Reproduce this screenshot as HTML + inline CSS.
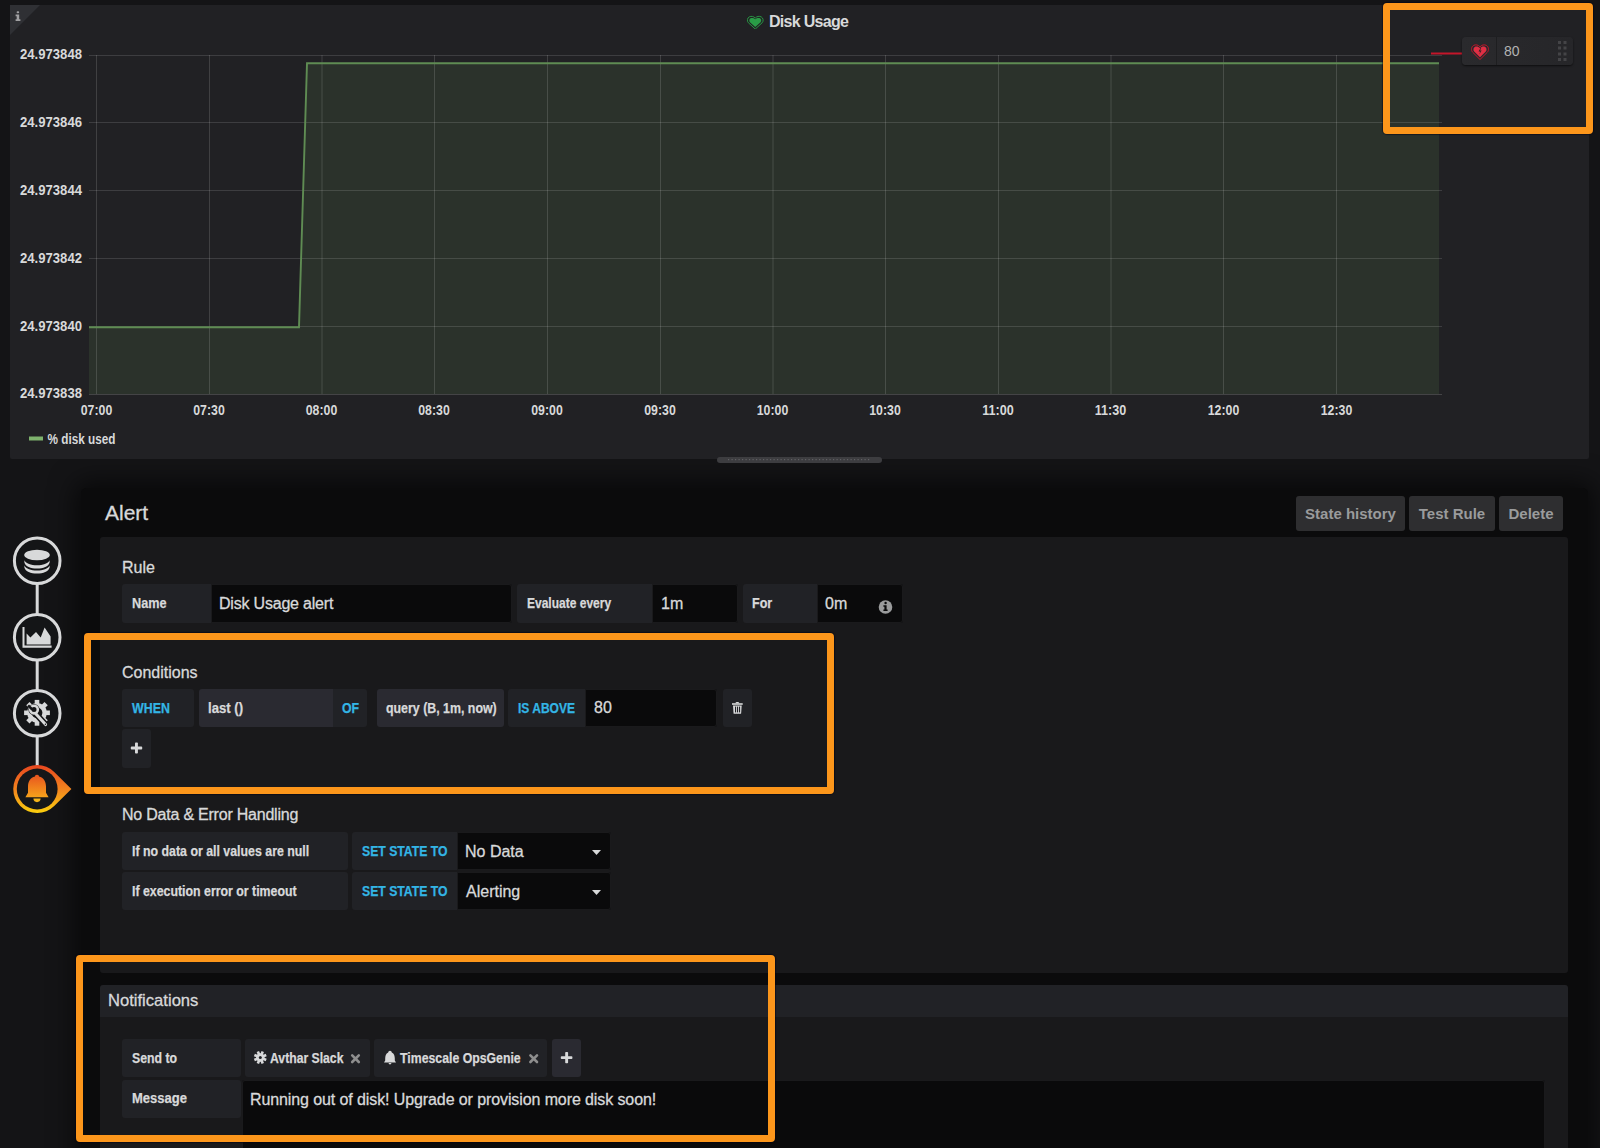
<!DOCTYPE html>
<html><head><meta charset="utf-8">
<style>
*{box-sizing:border-box;margin:0;padding:0}
html,body{width:1600px;height:1148px;overflow:hidden;background:#141416;font-family:"Liberation Sans",sans-serif;color:#d8d9da}
.a{position:absolute}
#panel{left:10px;top:5px;width:1579px;height:454px;background:#212124;border-radius:2px}
#editor{left:81px;top:488px;width:1507px;height:700px;background:#0b0b0c;border-radius:5px;box-shadow:0 0 26px 6px rgba(0,0,0,.6)}
.sec{background:#19191b;border-radius:3px}
.lbl{background:#212226;border-radius:3px;font-weight:bold;font-size:14px;color:#d8d9da;white-space:nowrap}
.t{display:inline-block;transform-origin:0 50%;-webkit-text-stroke:0.25px currentColor}
.inp{background:#0a0a0b;border-radius:3px;box-shadow:inset 0 0 0 1px #1a1a1c;font-size:16px;color:#d8d9da;white-space:nowrap;-webkit-text-stroke:0.3px #d8d9da}
.func{background:#2a2a31;border-radius:3px;font-weight:bold;font-size:14px;white-space:nowrap}
.kw{color:#33b5e5}
.h{font-size:16px;color:#d8d9da;white-space:nowrap;-webkit-text-stroke:0.3px #d8d9da}
.btn{background:#2e2e30;border-radius:3px;color:#9a9b9c;font-weight:bold;font-size:15px;white-space:nowrap}
.orange{border:7.3px solid #fc961b;border-radius:4px;box-shadow:0 0 1px 1px rgba(0,0,20,.5)}
</style></head>
<body>

<div id="editor" class="a"></div>
<div id="panel" class="a"></div>
<!-- chart svg -->
<svg class="a" style="left:0;top:0" width="1600" height="470" viewBox="0 0 1600 470" font-family="Liberation Sans">
  <polygon points="40,5 10,35 10,5" fill="#2f3034"/>
  <polygon points="89,327.3 299,327.3 307,63.2 1439,63.2 1439,394 89,394" fill="#2b322b"/>
  <g stroke="#ffffff" stroke-opacity="0.13" stroke-width="1">
    <line x1="89" y1="55.5" x2="1442" y2="55.5"/>
    <line x1="89" y1="122.5" x2="1442" y2="122.5"/>
    <line x1="89" y1="190.5" x2="1442" y2="190.5"/>
    <line x1="89" y1="258.5" x2="1442" y2="258.5"/>
    <line x1="89" y1="326.5" x2="1442" y2="326.5"/>
  </g>
  <g stroke="#ffffff" stroke-opacity="0.14" stroke-width="1">
    <line x1="96.5" y1="55" x2="96.5" y2="394"/>
    <line x1="209.5" y1="55" x2="209.5" y2="394"/>
    <line x1="322" y1="55" x2="322" y2="394"/>
    <line x1="434.5" y1="55" x2="434.5" y2="394"/>
    <line x1="547.5" y1="55" x2="547.5" y2="394"/>
    <line x1="660.5" y1="55" x2="660.5" y2="394"/>
    <line x1="773" y1="55" x2="773" y2="394"/>
    <line x1="885.5" y1="55" x2="885.5" y2="394"/>
    <line x1="998.5" y1="55" x2="998.5" y2="394"/>
    <line x1="1111" y1="55" x2="1111" y2="394"/>
    <line x1="1223.5" y1="55" x2="1223.5" y2="394"/>
    <line x1="1336.5" y1="55" x2="1336.5" y2="394"/>
  </g>
  <line x1="89" y1="394.5" x2="1442" y2="394.5" stroke="#444446" stroke-width="1"/>
  <polyline points="89,327.3 299,327.3 307,63.2 1439,63.2" fill="none" stroke="#5f8c53" stroke-width="1.9"/>
  <g fill="#d8d9da" font-size="14.4" font-weight="bold" text-anchor="end" style="-webkit-text-stroke:0.1px #d8d9da">
    <text x="82" y="58.7" textLength="62" lengthAdjust="spacingAndGlyphs">24.973848</text>
    <text x="82" y="126.7" textLength="62" lengthAdjust="spacingAndGlyphs">24.973846</text>
    <text x="82" y="194.7" textLength="62" lengthAdjust="spacingAndGlyphs">24.973844</text>
    <text x="82" y="262.7" textLength="62" lengthAdjust="spacingAndGlyphs">24.973842</text>
    <text x="82" y="330.7" textLength="62" lengthAdjust="spacingAndGlyphs">24.973840</text>
    <text x="82" y="397.7" textLength="62" lengthAdjust="spacingAndGlyphs">24.973838</text>
  </g>
  <g fill="#d8d9da" font-size="14.4" font-weight="bold" text-anchor="middle" style="-webkit-text-stroke:0.1px #d8d9da">
    <text x="96.5" y="414.6" textLength="31.5" lengthAdjust="spacingAndGlyphs">07:00</text>
    <text x="209" y="414.6" textLength="31.5" lengthAdjust="spacingAndGlyphs">07:30</text>
    <text x="321.5" y="414.6" textLength="31.5" lengthAdjust="spacingAndGlyphs">08:00</text>
    <text x="434" y="414.6" textLength="31.5" lengthAdjust="spacingAndGlyphs">08:30</text>
    <text x="547" y="414.6" textLength="31.5" lengthAdjust="spacingAndGlyphs">09:00</text>
    <text x="660" y="414.6" textLength="31.5" lengthAdjust="spacingAndGlyphs">09:30</text>
    <text x="772.5" y="414.6" textLength="31.5" lengthAdjust="spacingAndGlyphs">10:00</text>
    <text x="885" y="414.6" textLength="31.5" lengthAdjust="spacingAndGlyphs">10:30</text>
    <text x="998" y="414.6" textLength="31.5" lengthAdjust="spacingAndGlyphs">11:00</text>
    <text x="1110.5" y="414.6" textLength="31.5" lengthAdjust="spacingAndGlyphs">11:30</text>
    <text x="1223.5" y="414.6" textLength="31.5" lengthAdjust="spacingAndGlyphs">12:00</text>
    <text x="1336.5" y="414.6" textLength="31.5" lengthAdjust="spacingAndGlyphs">12:30</text>
  </g>
  <rect x="29" y="436.5" width="14" height="4" fill="#7eb26d"/>
  <text x="47.5" y="443.5" font-size="14.4" font-weight="bold" fill="#d8d9da" textLength="68" lengthAdjust="spacingAndGlyphs" style="-webkit-text-stroke:0.2px #d8d9da">% disk used</text>
  <!-- threshold -->
  <line x1="1431" y1="53.5" x2="1462" y2="53.5" stroke="#c4162a" stroke-width="2"/>
  <!-- scroll handle -->
  <rect x="717" y="457" width="165" height="6" rx="3" fill="#3d3d40"/>
  <g><rect x="728.0" y="459" width="1.2" height="1.2" fill="#606063"/><rect x="731.5" y="459" width="1.2" height="1.2" fill="#606063"/><rect x="735.0" y="459" width="1.2" height="1.2" fill="#606063"/><rect x="738.5" y="459" width="1.2" height="1.2" fill="#606063"/><rect x="742.0" y="459" width="1.2" height="1.2" fill="#606063"/><rect x="745.5" y="459" width="1.2" height="1.2" fill="#606063"/><rect x="749.0" y="459" width="1.2" height="1.2" fill="#606063"/><rect x="752.5" y="459" width="1.2" height="1.2" fill="#606063"/><rect x="756.0" y="459" width="1.2" height="1.2" fill="#606063"/><rect x="759.5" y="459" width="1.2" height="1.2" fill="#606063"/><rect x="763.0" y="459" width="1.2" height="1.2" fill="#606063"/><rect x="766.5" y="459" width="1.2" height="1.2" fill="#606063"/><rect x="770.0" y="459" width="1.2" height="1.2" fill="#606063"/><rect x="773.5" y="459" width="1.2" height="1.2" fill="#606063"/><rect x="777.0" y="459" width="1.2" height="1.2" fill="#606063"/><rect x="780.5" y="459" width="1.2" height="1.2" fill="#606063"/><rect x="784.0" y="459" width="1.2" height="1.2" fill="#606063"/><rect x="787.5" y="459" width="1.2" height="1.2" fill="#606063"/><rect x="791.0" y="459" width="1.2" height="1.2" fill="#606063"/><rect x="794.5" y="459" width="1.2" height="1.2" fill="#606063"/><rect x="798.0" y="459" width="1.2" height="1.2" fill="#606063"/><rect x="801.5" y="459" width="1.2" height="1.2" fill="#606063"/><rect x="805.0" y="459" width="1.2" height="1.2" fill="#606063"/><rect x="808.5" y="459" width="1.2" height="1.2" fill="#606063"/><rect x="812.0" y="459" width="1.2" height="1.2" fill="#606063"/><rect x="815.5" y="459" width="1.2" height="1.2" fill="#606063"/><rect x="819.0" y="459" width="1.2" height="1.2" fill="#606063"/><rect x="822.5" y="459" width="1.2" height="1.2" fill="#606063"/><rect x="826.0" y="459" width="1.2" height="1.2" fill="#606063"/><rect x="829.5" y="459" width="1.2" height="1.2" fill="#606063"/><rect x="833.0" y="459" width="1.2" height="1.2" fill="#606063"/><rect x="836.5" y="459" width="1.2" height="1.2" fill="#606063"/><rect x="840.0" y="459" width="1.2" height="1.2" fill="#606063"/><rect x="843.5" y="459" width="1.2" height="1.2" fill="#606063"/><rect x="847.0" y="459" width="1.2" height="1.2" fill="#606063"/><rect x="850.5" y="459" width="1.2" height="1.2" fill="#606063"/><rect x="854.0" y="459" width="1.2" height="1.2" fill="#606063"/><rect x="857.5" y="459" width="1.2" height="1.2" fill="#606063"/><rect x="861.0" y="459" width="1.2" height="1.2" fill="#606063"/><rect x="864.5" y="459" width="1.2" height="1.2" fill="#606063"/><rect x="868.0" y="459" width="1.2" height="1.2" fill="#606063"/></g>
</svg>

<!-- info corner i -->
<svg class="a" style="left:14px;top:10px" width="8" height="12" viewBox="0 0 8 12">
  <rect x="2.6" y="1.2" width="2.6" height="2" rx="1" fill="#a0a0a2"/>
  <path d="M1.6 4.6h3.6v4.6h1.2v1.7H1.6V9.2h1.1V6.3H1.6z" fill="#a0a0a2"/>
</svg>
<!-- threshold handle -->
<div class="a" style="left:1462px;top:37px;width:111px;height:28px;border-radius:4px;background:linear-gradient(90deg,#2a2a2d,#262629);box-shadow:0 1px 2px rgba(0,0,0,.6)"></div>
<div class="a" style="left:1496px;top:37px;width:1px;height:28px;background:#1e1e20"></div>
<div class="a" style="left:1504px;top:43px;font-size:14px;line-height:16px;color:#b3b3b3">80</div>
<svg class="a" style="left:1555px;top:40px" width="14" height="22" viewBox="0 0 14 22" fill="#444447">
  <rect x="3" y="1" width="3" height="3"/><rect x="8.5" y="1" width="3" height="3"/>
  <rect x="3" y="6.5" width="3" height="3"/><rect x="8.5" y="6.5" width="3" height="3"/>
  <rect x="3" y="12.5" width="3" height="3"/><rect x="8.5" y="12.5" width="3" height="3"/>
  <rect x="3" y="18" width="3" height="3"/><rect x="8.5" y="18" width="3" height="3"/>
</svg>
<svg class="a" style="left:1471px;top:43px" width="18" height="18" viewBox="0 0 18 18">
  <path d="M9 16.5 L1.6 9.2 C-0.2 7.2 0.3 3.6 2.6 2.4 C4.6 1.3 7.3 1.8 9 3.8 C10.7 1.8 13.4 1.3 15.4 2.4 C17.7 3.6 18.2 7.2 16.4 9.2 Z" fill="none" stroke="#c4162a" stroke-width="1"/>
  <path d="M9 14.2 L3.2 8.6 C2 7.2 2.3 4.8 3.8 4 C5.3 3.2 7.6 3.6 9 5.3 C10.4 3.6 12.7 3.2 14.2 4 C15.7 4.8 16 7.2 14.8 8.6 Z" fill="#e02f44"/>
  <path d="M9.8 4.6 L7.6 8.4 L9.3 8.6 L8.2 11.4 L10.6 7.6 L9 7.4 L10.2 4.9 Z" fill="#212124"/>
</svg>

<!-- title heart -->
<svg class="a" style="left:747px;top:14.5px" width="16.5" height="14.8" viewBox="0 0 17 16" preserveAspectRatio="none">
  <path d="M8.5 15.2 L1.4 8.4 C-0.3 6.6 0.2 3.2 2.4 2 C4.3 1 6.9 1.4 8.5 3.3 C10.1 1.4 12.7 1 14.6 2 C16.8 3.2 17.3 6.6 15.6 8.4 Z" fill="none" stroke="#299c46" stroke-width="1"/>
  <path d="M8.5 13 L3 7.8 C1.9 6.5 2.2 4.3 3.6 3.5 C5 2.8 7.2 3.1 8.5 4.7 C9.8 3.1 12 2.8 13.4 3.5 C14.8 4.3 15.1 6.5 14 7.8 Z" fill="#299c46"/>
</svg>
<!-- title -->
<div class="a" style="left:769px;top:14px;font-size:16px;line-height:16px;font-weight:bold;color:#d8d9da;white-space:nowrap;letter-spacing:-0.7px">Disk Usage</div>

<!-- sidebar -->
<svg class="a" style="left:0;top:520px" width="80" height="310" viewBox="0 520 80 310">
  <defs>
    <linearGradient id="og" x1="0" y1="0" x2="0" y2="1">
      <stop offset="0" stop-color="#e8461f"/>
      <stop offset="0.55" stop-color="#f38a1e"/>
      <stop offset="1" stop-color="#fbcf0d"/>
    </linearGradient>
    <linearGradient id="bg2" x1="0" y1="0" x2="0" y2="1">
      <stop offset="0" stop-color="#e8541f"/>
      <stop offset="1" stop-color="#f6a21b"/>
    </linearGradient>
  </defs>
  <g stroke="#d8d9da" stroke-width="3">
    <line x1="37.2" y1="584" x2="37.2" y2="615"/>
    <line x1="37.2" y1="660" x2="37.2" y2="691"/>
    <line x1="37.2" y1="736" x2="37.2" y2="767"/>
  </g>
  <g stroke="#d8d9da" stroke-width="3" fill="#141517">
    <circle cx="37.2" cy="560.8" r="22.8"/>
    <circle cx="37.2" cy="637.3" r="22.8"/>
    <circle cx="37.2" cy="713.3" r="22.8"/>
  </g>
  <!-- db -->
  <g fill="#d8d9da">
    <ellipse cx="37" cy="555" rx="12.8" ry="5.2"/>
    <path d="M24.4 560.2 C26 563.6 31 565.2 37 565.2 C43 565.2 48 563.6 49.6 560.2 L49.6 562.4 C48.4 566.6 43.4 568.4 37 568.4 C30.6 568.4 25.6 566.6 24.4 562.4 Z"/>
    <path d="M24.4 565.4 C26 568.8 31 570.4 37 570.4 C43 570.4 48 568.8 49.6 565.4 L49.6 567.6 C48.4 571.8 43.4 573.6 37 573.6 C30.6 573.6 25.6 571.8 24.4 567.6 Z"/>
  </g>
  <!-- chart -->
  <g fill="#d8d9da">
    <path d="M22.5 627 H24.5 V645.6 H51.6 V647.8 H22.5 Z"/>
    <path d="M26.6 644.4 V633.5 L30.4 637.5 L36 632 L40.7 637.6 L44.6 627.6 L50.6 636.5 V644.4 Z"/>
  </g>
  <!-- gear + wrench -->
  <g transform="translate(37,712.8)">
    <g fill="#d8d9da">
      <circle r="9.9"/>
      <rect x="-2.3" y="-12.9" width="4.6" height="6"/>
      <rect x="-2.3" y="-12.9" width="4.6" height="6" transform="rotate(45)"/>
      <rect x="-2.3" y="-12.9" width="4.6" height="6" transform="rotate(90)"/>
      <rect x="-2.3" y="-12.9" width="4.6" height="6" transform="rotate(135)"/>
      <rect x="-2.3" y="-12.9" width="4.6" height="6" transform="rotate(180)"/>
      <rect x="-2.3" y="-12.9" width="4.6" height="6" transform="rotate(225)"/>
      <rect x="-2.3" y="-12.9" width="4.6" height="6" transform="rotate(270)"/>
      <rect x="-2.3" y="-12.9" width="4.6" height="6" transform="rotate(315)"/>
    </g>
    <circle r="5.4" fill="#141517"/>
  </g>
  <g>
    <line x1="36" y1="714" x2="45.6" y2="724.6" stroke="#141517" stroke-width="6" stroke-linecap="round"/>
    <circle cx="34" cy="709.6" r="5.6" fill="#141517"/>
    <line x1="36" y1="714" x2="45.6" y2="724.6" stroke="#d8d9da" stroke-width="3" stroke-linecap="round"/>
    <circle cx="34" cy="709.6" r="3.8" fill="none" stroke="#d8d9da" stroke-width="2.6"/>
    <path d="M29 704.4 L33.2 708.6 L31.4 710.4 L27.2 706.2 Z" fill="#141517"/>
    <circle cx="45.4" cy="724.2" r="0.7" fill="#141517"/>
  </g>
  <!-- bell circle w/ pointer -->
  <path d="M54.2 772 L71.4 789 L54.2 806 A24 24 0 1 1 54.2 772 Z" fill="url(#og)"/>
  <circle cx="37.2" cy="789" r="20.4" fill="#161719"/>
  <g fill="url(#bg2)">
    <path d="M37 774.8 C38.3 774.8 39 775.6 39 776.4 C43.6 777.6 46 781.4 46 786.4 V792.8 L48.6 797.2 H25.4 L28 792.8 V786.4 C28 781.4 30.4 777.6 35 776.4 C35 775.6 35.7 774.8 37 774.8 Z"/>
    <path d="M33.4 798.6 H40.6 C40.6 800.8 39 802.2 37 802.2 C35 802.2 33.4 800.8 33.4 798.6 Z" fill="#f7b51a"/>
  </g>
</svg>

<!-- editor header -->
<div class="a h" style="left:105px;top:502px;font-size:21px;line-height:21px">Alert</div>
<div class="a btn" style="left:1296px;top:496px;width:109px;height:35px;line-height:35px;text-align:center">State history</div>
<div class="a btn" style="left:1409px;top:496px;width:86px;height:35px;line-height:35px;text-align:center">Test Rule</div>
<div class="a btn" style="left:1499px;top:496px;width:64px;height:35px;line-height:35px;text-align:center">Delete</div>

<!-- main section -->
<div class="a sec" style="left:100px;top:537px;width:1468px;height:436px"></div>

<div class="a h" style="left:122px;top:560px;line-height:16px">Rule</div>
<div class="a lbl" style="left:122px;top:584px;width:89px;height:39px;line-height:39px;padding-left:10px;border-radius:3px 0 0 3px"><span class="t" style="transform:scaleX(0.905)">Name</span></div>
<div class="a inp" style="left:211px;top:584px;width:301px;height:39px;line-height:39px;padding-left:8px;border-radius:0 3px 3px 0;letter-spacing:-0.2px">Disk Usage alert</div>
<div class="a lbl" style="left:517px;top:584px;width:135px;height:39px;line-height:39px;padding-left:10px;border-radius:3px 0 0 3px"><span class="t" style="transform:scaleX(0.858)">Evaluate every</span></div>
<div class="a inp" style="left:652px;top:584px;width:86px;height:39px;line-height:39px;padding-left:9px;border-radius:0 3px 3px 0">1m</div>
<div class="a lbl" style="left:743px;top:584px;width:74px;height:39px;line-height:39px;padding-left:9px;border-radius:3px 0 0 3px"><span class="t" style="transform:scaleX(0.895)">For</span></div>
<div class="a inp" style="left:817px;top:584px;width:86px;height:39px;line-height:39px;padding-left:8px;border-radius:0 3px 3px 0">0m</div>

<div class="a h" style="left:122px;top:665px;line-height:16px">Conditions</div>
<div class="a lbl kw" style="left:122px;top:689px;width:72px;height:38px;line-height:38px;padding-left:10px"><span class="t" style="transform:scaleX(0.886)">WHEN</span></div>
<div class="a func" style="left:199px;top:689px;width:134px;height:38px;line-height:38px;padding-left:9px;border-radius:3px 0 0 3px"><span class="t" style="transform:scaleX(0.94)">last ()</span></div>
<div class="a lbl kw" style="left:333px;top:689px;width:34px;height:38px;line-height:38px;padding-left:9px;border-radius:0 3px 3px 0"><span class="t" style="transform:scaleX(0.88)">OF</span></div>
<div class="a func" style="left:377px;top:689px;width:127px;height:38px;line-height:38px;padding-left:9px"><span class="t" style="transform:scaleX(0.884)">query (B, 1m, now)</span></div>
<div class="a lbl kw" style="left:508px;top:689px;width:77px;height:38px;line-height:38px;padding-left:10px;border-radius:3px 0 0 3px"><span class="t" style="transform:scaleX(0.858)">IS ABOVE</span></div>
<div class="a inp" style="left:585px;top:689px;width:132px;height:38px;line-height:38px;padding-left:9px;border-radius:0 3px 3px 0">80</div>
<div class="a lbl" style="left:723px;top:689px;width:29px;height:38px"></div>
<div class="a lbl" style="left:122px;top:729px;width:29px;height:39px"></div>

<div class="a h" style="left:122px;top:807px;line-height:16px;letter-spacing:-0.22px">No Data &amp; Error Handling</div>
<div class="a lbl" style="left:122px;top:832px;width:226px;height:38px;line-height:38px;padding-left:10px"><span class="t" style="transform:scaleX(0.883)">If no data or all values are null</span></div>
<div class="a lbl kw" style="left:352px;top:832px;width:105px;height:38px;line-height:38px;padding-left:10px;border-radius:3px 0 0 3px"><span class="t" style="transform:scaleX(0.872)">SET STATE TO</span></div>
<div class="a inp" style="left:457px;top:832px;width:154px;height:38px;line-height:39px;padding-left:8px;border-radius:0 3px 3px 0">No Data</div>
<div class="a lbl" style="left:122px;top:872px;width:226px;height:38px;line-height:38px;padding-left:10px"><span class="t" style="transform:scaleX(0.882)">If execution error or timeout</span></div>
<div class="a lbl kw" style="left:352px;top:872px;width:105px;height:38px;line-height:38px;padding-left:10px;border-radius:3px 0 0 3px"><span class="t" style="transform:scaleX(0.872)">SET STATE TO</span></div>
<div class="a inp" style="left:457px;top:872px;width:154px;height:38px;line-height:40px;padding-left:9px;border-radius:0 3px 3px 0">Alerting</div>

<!-- notifications -->
<div class="a" style="left:100px;top:985px;width:1468px;height:32px;background:#212226;border-radius:3px 3px 0 0"></div>
<div class="a" style="left:100px;top:1017px;width:1468px;height:140px;background:#19191b"></div>
<div class="a h" style="left:108px;top:993px;line-height:16px;font-size:16.6px">Notifications</div>
<div class="a lbl" style="left:122px;top:1039px;width:119px;height:38px;line-height:38px;padding-left:10px"><span class="t" style="transform:scaleX(0.878)">Send to</span></div>
<div class="a lbl" style="left:245px;top:1039px;width:125px;height:38px;line-height:38px;padding-left:25px"><span class="t" style="transform:scaleX(0.871)">Avthar Slack</span></div>
<div class="a lbl" style="left:374px;top:1039px;width:173px;height:38px;line-height:38px;padding-left:26px"><span class="t" style="transform:scaleX(0.878)">Timescale OpsGenie</span></div>
<div class="a func" style="left:552px;top:1039px;width:29px;height:38px"></div>
<div class="a lbl" style="left:122px;top:1080px;width:119px;height:38px;line-height:38px;padding-left:10px"><span class="t" style="transform:scaleX(0.929);position:relative;top:-1px">Message</span></div>
<div class="a inp" style="left:242px;top:1080px;width:1303px;height:80px;padding:12px 0 0 8px;line-height:16px;letter-spacing:-0.1px">Running out of disk! Upgrade or provision more disk soon!</div>

<!-- form icons -->
<svg class="a" style="left:0;top:0" width="1600" height="1148" viewBox="0 0 1600 1148">
  <!-- info icon -->
  <circle cx="885.5" cy="607" r="6.8" fill="#9a9b9c"/>
  <circle cx="885.6" cy="603" r="1.2" fill="#0a0a0b"/>
  <path d="M883.4 605.2 H886.6 V609.4 H887.6 V611 H883.4 V609.4 H884.4 V606.8 H883.4 Z" fill="#0a0a0b"/>
  <!-- trash -->
  <g fill="#d8d9da">
    <path d="M732 703.2 H742.7 V704.8 H732 Z"/>
    <path d="M735.4 703.2 C735.4 701.6 739.3 701.6 739.3 703.2 Z"/>
    <path d="M733 705.6 H741.7 L741.1 713.7 H733.6 Z"/>
  </g>
  <g fill="#212226">
    <rect x="735" y="706.6" width="1.1" height="5.8"/>
    <rect x="737" y="706.6" width="1.1" height="5.8"/>
    <rect x="739" y="706.6" width="1.1" height="5.8"/>
  </g>
  <!-- plus (conditions) -->
  <g fill="#d8d9da">
    <rect x="130.8" y="746.6" width="11.4" height="2.9" rx="0.8"/>
    <rect x="135" y="742.5" width="2.9" height="11" rx="0.8"/>
  </g>
  <!-- plus (notifications) -->
  <g fill="#d8d9da">
    <rect x="560.8" y="1056.2" width="11.6" height="2.9" rx="0.8"/>
    <rect x="565.2" y="1052" width="2.9" height="11.2" rx="0.8"/>
  </g>
  <!-- carets -->
  <path d="M592 850 H601 L596.5 855 Z" fill="#d8d9da"/>
  <path d="M592 890 H601 L596.5 895 Z" fill="#d8d9da"/>
  <!-- x icons -->
  <g stroke="#8e8e8e" stroke-width="2.6" stroke-linecap="round">
    <path d="M352.2 1055.4 L358.8 1062 M358.8 1055.4 L352.2 1062"/>
    <path d="M530.4 1055.4 L537 1062 M537 1055.4 L530.4 1062"/>
  </g>
  <!-- slack-ish icon -->
  <g transform="translate(260.3,1057.5)" fill="#d8d9da">
    <circle r="4.2"/>
    <rect x="-1.3" y="-6.4" width="2.6" height="12.8" transform="rotate(22.5)"/>
    <rect x="-1.3" y="-6.4" width="2.6" height="12.8" transform="rotate(67.5)"/>
    <rect x="-1.3" y="-6.4" width="2.6" height="12.8" transform="rotate(112.5)"/>
    <rect x="-1.3" y="-6.4" width="2.6" height="12.8" transform="rotate(157.5)"/>
    <circle r="1.5" fill="#212226"/>
  </g>
  <!-- bell icon -->
  <path d="M390 1050.8 C391 1050.8 391.6 1051.6 391.8 1052.4 C394.2 1053.4 394.8 1056 394.8 1058.4 V1060.6 L396 1062.4 H384 L385.2 1060.6 V1058.4 C385.2 1056 385.8 1053.4 388.2 1052.4 C388.4 1051.6 389 1050.8 390 1050.8 Z M388.3 1063 H391.7 L390 1064.8 Z" fill="#d8d9da"/>
</svg>

<!-- orange boxes -->
<div class="a orange" style="left:1383px;top:3px;width:210px;height:131px"></div>
<div class="a orange" style="left:84px;top:633px;width:750px;height:161px"></div>
<div class="a orange" style="left:76px;top:955px;width:699px;height:187px"></div>
</body></html>
